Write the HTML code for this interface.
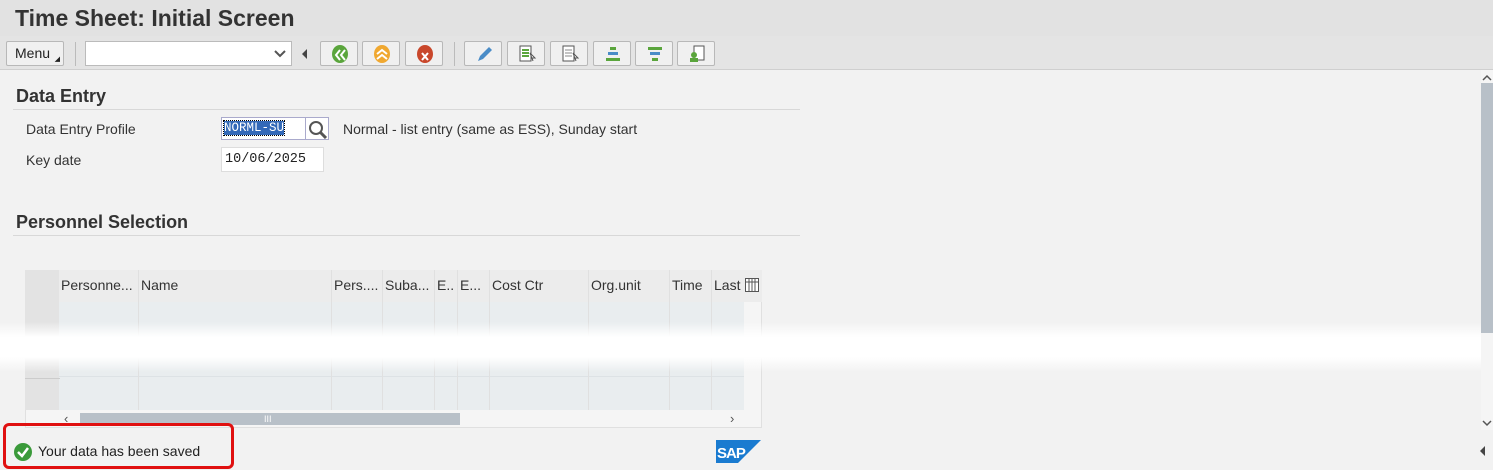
<!DOCTYPE html>
<html><head><style>
*{box-sizing:border-box;margin:0;padding:0}
body{width:1493px;height:470px;overflow:hidden;background:#f2f2f2;font-family:"Liberation Sans",Arial,sans-serif;position:relative;color:#222}
.abs{position:absolute}
.title{left:0;top:0;width:1493px;height:36px;background:#e2e2e2;font-size:23px;font-weight:bold;padding:5px 0 0 15px;color:#333}
.tb{left:0;top:36px;width:1493px;height:34px;background:#e4e4e4;border-bottom:1px solid #cfcfcf}
.btn{position:absolute;top:41px;height:25px;border:1px solid #b8b8b8;background:#f0f0f0;border-radius:2px}
.sep{position:absolute;top:42px;width:1px;height:24px;background:#bbb}
.h{font-size:18px;font-weight:bold;color:#333}
.line{height:1px;background:#d8d8d8}
.lbl{font-size:14px;color:#333}
.cell{position:absolute;top:270px;height:32px;font-size:14px;padding:7px 0 0 2px;color:#333;border-right:1px solid #e0e0e0;white-space:nowrap;overflow:hidden}
</style></head><body>
<div class="abs title">Time Sheet: Initial Screen</div>
<div class="abs tb"></div>
<div class="btn" style="left:6px;width:58px;font-size:14px;padding:3px 0 0 8px">Menu<span style="position:absolute;right:3px;bottom:2px;font-size:7px">◢</span></div>
<div class="sep" style="left:75px"></div>
<div class="abs" style="left:85px;top:41px;width:207px;height:25px;background:#fff;border:1px solid #bbb"><svg class="abs" style="left:188px;top:8px" width="12" height="8"><path d="M1 1l5 5 5-5" stroke="#555" stroke-width="2" fill="none"/></svg></div>
<svg class="abs" style="left:301px;top:48px" width="8" height="12"><path d="M6 1L1 6l5 5z" fill="#444"/></svg>
<div class="btn" style="left:320px;width:38px"><svg class="abs" style="left:9px;top:2px" width="20" height="20"><ellipse cx="10" cy="10" rx="8" ry="9" fill="#5aa53c"/><path d="M10 6l-4 5 4 5M15 6l-4 5 4 5" stroke="#fff" stroke-width="2" fill="none"/></svg></div>
<div class="btn" style="left:362px;width:38px"><svg class="abs" style="left:9px;top:2px" width="20" height="20"><ellipse cx="10" cy="10" rx="8" ry="9" fill="#f0a830"/><path d="M5 10l5-4 5 4M5 15l5-4 5 4" stroke="#fff" stroke-width="2" fill="none"/></svg></div>
<div class="btn" style="left:405px;width:38px"><svg class="abs" style="left:9px;top:2px" width="20" height="20"><ellipse cx="10" cy="10" rx="8" ry="9" fill="#c9472b"/><path d="M7 9l6 7M13 9l-6 7" stroke="#fff" stroke-width="2"/></svg></div>
<div class="sep" style="left:454px"></div>
<div class="btn" style="left:464px;width:38px"><svg class="abs" style="left:9px;top:2px" width="20" height="20"><path d="M4 17l2-5 9-9 3 3-9 9z" fill="#4a8cc7"/></svg></div>
<div class="btn" style="left:507px;width:38px"><svg class="abs" style="left:9px;top:2px" width="20" height="20"><rect x="3" y="2" width="11" height="15" fill="#fff" stroke="#555"/><path d="M5 6h7M5 9h7M5 12h7" stroke="#5aa53c" stroke-width="2"/><path d="M13 9l5 5-3 0 1 3z" fill="#fff" stroke="#555"/></svg></div>
<div class="btn" style="left:550px;width:38px"><svg class="abs" style="left:9px;top:2px" width="20" height="20"><rect x="3" y="2" width="11" height="15" fill="#fff" stroke="#555"/><path d="M5 6h7M5 9h7M5 12h7" stroke="#888" stroke-width="1"/><path d="M13 9l5 5-3 0 1 3z" fill="#fff" stroke="#555"/></svg></div>
<div class="btn" style="left:593px;width:38px"><svg class="abs" style="left:9px;top:2px" width="20" height="20"><rect x="7" y="3" width="6" height="3" fill="#5aa53c"/><rect x="5" y="8" width="10" height="3" fill="#4a8cc7"/><rect x="3" y="14" width="14" height="3" fill="#5aa53c"/></svg></div>
<div class="btn" style="left:635px;width:38px"><svg class="abs" style="left:9px;top:2px" width="20" height="20"><rect x="3" y="3" width="14" height="3" fill="#5aa53c"/><rect x="5" y="8" width="10" height="3" fill="#4a8cc7"/><rect x="7" y="14" width="6" height="3" fill="#5aa53c"/></svg></div>
<div class="btn" style="left:677px;width:38px"><svg class="abs" style="left:9px;top:2px" width="20" height="20"><rect x="7" y="2" width="10" height="14" fill="#fff" stroke="#555"/><circle cx="7" cy="11" r="3" fill="#5aa53c"/><rect x="3" y="14" width="8" height="4" fill="#5aa53c"/></svg></div>

<div class="abs h" style="left:16px;top:86px">Data Entry</div>
<div class="abs line" style="left:13px;top:109px;width:787px"></div>
<div class="abs lbl" style="left:26px;top:121px">Data Entry Profile</div>
<div class="abs" style="left:221px;top:117px;width:85px;height:23px;background:#fff;border:1px solid #aac"><span style="position:absolute;left:2px;top:3px;background:#3369b8;color:#fff;font-family:'Liberation Mono',monospace;font-size:12.5px;outline:1px dotted #000">NORML-SU</span></div>
<div class="abs" style="left:305px;top:117px;width:24px;height:23px;background:#fff;border:1px solid #aac"><svg class="abs" style="left:2px;top:2px" width="20" height="19"><circle cx="8" cy="8" r="6" stroke="#555" stroke-width="2" fill="none"/><path d="M12 12l6 6" stroke="#555" stroke-width="3"/></svg></div>
<div class="abs lbl" style="left:343px;top:121px">Normal - list entry (same as ESS), Sunday start</div>
<div class="abs lbl" style="left:26px;top:152px">Key date</div>
<div class="abs" style="left:221px;top:147px;width:103px;height:25px;background:#fff;border:1px solid #ddd;font-family:'Liberation Mono',monospace;font-size:13.5px;padding:4px 0 0 3px">10/06/2025</div>

<div class="abs h" style="left:16px;top:212px">Personnel Selection</div>
<div class="abs line" style="left:13px;top:235px;width:787px"></div>

<div class="abs" style="left:25px;top:270px;width:737px;height:158px;background:#f5f5f5;border:1px solid #e0e0e0"></div>
<div class="abs" style="left:25px;top:270px;width:35px;height:140px;background:#e3e3e3"></div>
<div class="abs" style="left:59px;top:270px;width:703px;height:32px;background:#ececec"></div>
<div class="abs" style="left:59px;top:302px;width:685px;height:108px;background:#e9edef"></div>
<div class="abs" style="left:59px;top:376px;width:685px;height:1px;background:#dde2e5"></div>
<div class="abs" style="left:25px;top:378px;width:35px;height:1px;background:#ccc"></div>
<div class="cell" style="left:59px;width:80px;height:140px">Personne...</div>
<div class="cell" style="left:139px;width:193px;height:140px">Name</div>
<div class="cell" style="left:332px;width:51px;height:140px">Pers....</div>
<div class="cell" style="left:383px;width:52px;height:140px">Suba...</div>
<div class="cell" style="left:435px;width:23px;height:140px">E..</div>
<div class="cell" style="left:458px;width:32px;height:140px">E...</div>
<div class="cell" style="left:490px;width:99px;height:140px">Cost Ctr</div>
<div class="cell" style="left:589px;width:81px;height:140px">Org.unit</div>
<div class="cell" style="left:670px;width:42px;height:140px">Time</div>
<div class="cell" style="left:712px;width:32px;height:140px;border:none">Last</div>
<svg class="abs" style="left:745px;top:278px" width="14" height="14"><rect x="0.5" y="0.5" width="13" height="13" fill="#fff" stroke="#555"/><path d="M0 4h14M4 0v14M7 0v14M10 0v14" stroke="#555"/></svg>
<div class="abs" style="left:80px;top:413px;width:380px;height:12px;background:#b8c0c8"></div>
<div class="abs" style="left:264px;top:414px;font-size:9px;color:#fff">III</div>
<div class="abs" style="left:64px;top:411px;font-size:13px;color:#555">‹</div>
<div class="abs" style="left:730px;top:411px;font-size:13px;color:#555">›</div>

<div class="abs" style="left:0;top:322px;width:1493px;height:50px;background:linear-gradient(#f2f2f200,#fff 30%,#fff 70%,#f2f2f200)"></div>

<div class="abs" style="left:1481px;top:70px;width:12px;height:360px;background:#f5f5f5"></div>
<div class="abs" style="left:1481px;top:83px;width:12px;height:250px;background:#b8c0c8"></div>
<svg class="abs" style="left:1482px;top:74px" width="10" height="7"><path d="M1 6l4-4 4 4" stroke="#555" stroke-width="1.5" fill="none"/></svg>
<svg class="abs" style="left:1482px;top:420px" width="10" height="7"><path d="M1 1l4 4 4-4" stroke="#555" stroke-width="1.5" fill="none"/></svg>
<svg class="abs" style="left:1479px;top:446px" width="8" height="10"><path d="M6 0L1 5l5 5z" fill="#444"/></svg>

<div class="abs" style="left:3px;top:423px;width:231px;height:46px;border:3px solid #e01010;border-radius:6px"></div>
<svg class="abs" style="left:13px;top:442px" width="20" height="20"><circle cx="10" cy="10" r="9" fill="#3a9a3a"/><path d="M5 10l4 4 6-8" stroke="#fff" stroke-width="2.5" fill="none"/></svg>
<div class="abs" style="left:38px;top:443px;font-size:14px;color:#222">Your data has been saved</div>
<svg class="abs" style="left:716px;top:440px" width="45" height="23"><path d="M0 0h45L22 23H0z" fill="#1a7bd0"/><text x="1" y="18" font-family="Liberation Sans" font-weight="bold" font-size="15" letter-spacing="-1" fill="#fff">SAP</text></svg>
</body></html>
